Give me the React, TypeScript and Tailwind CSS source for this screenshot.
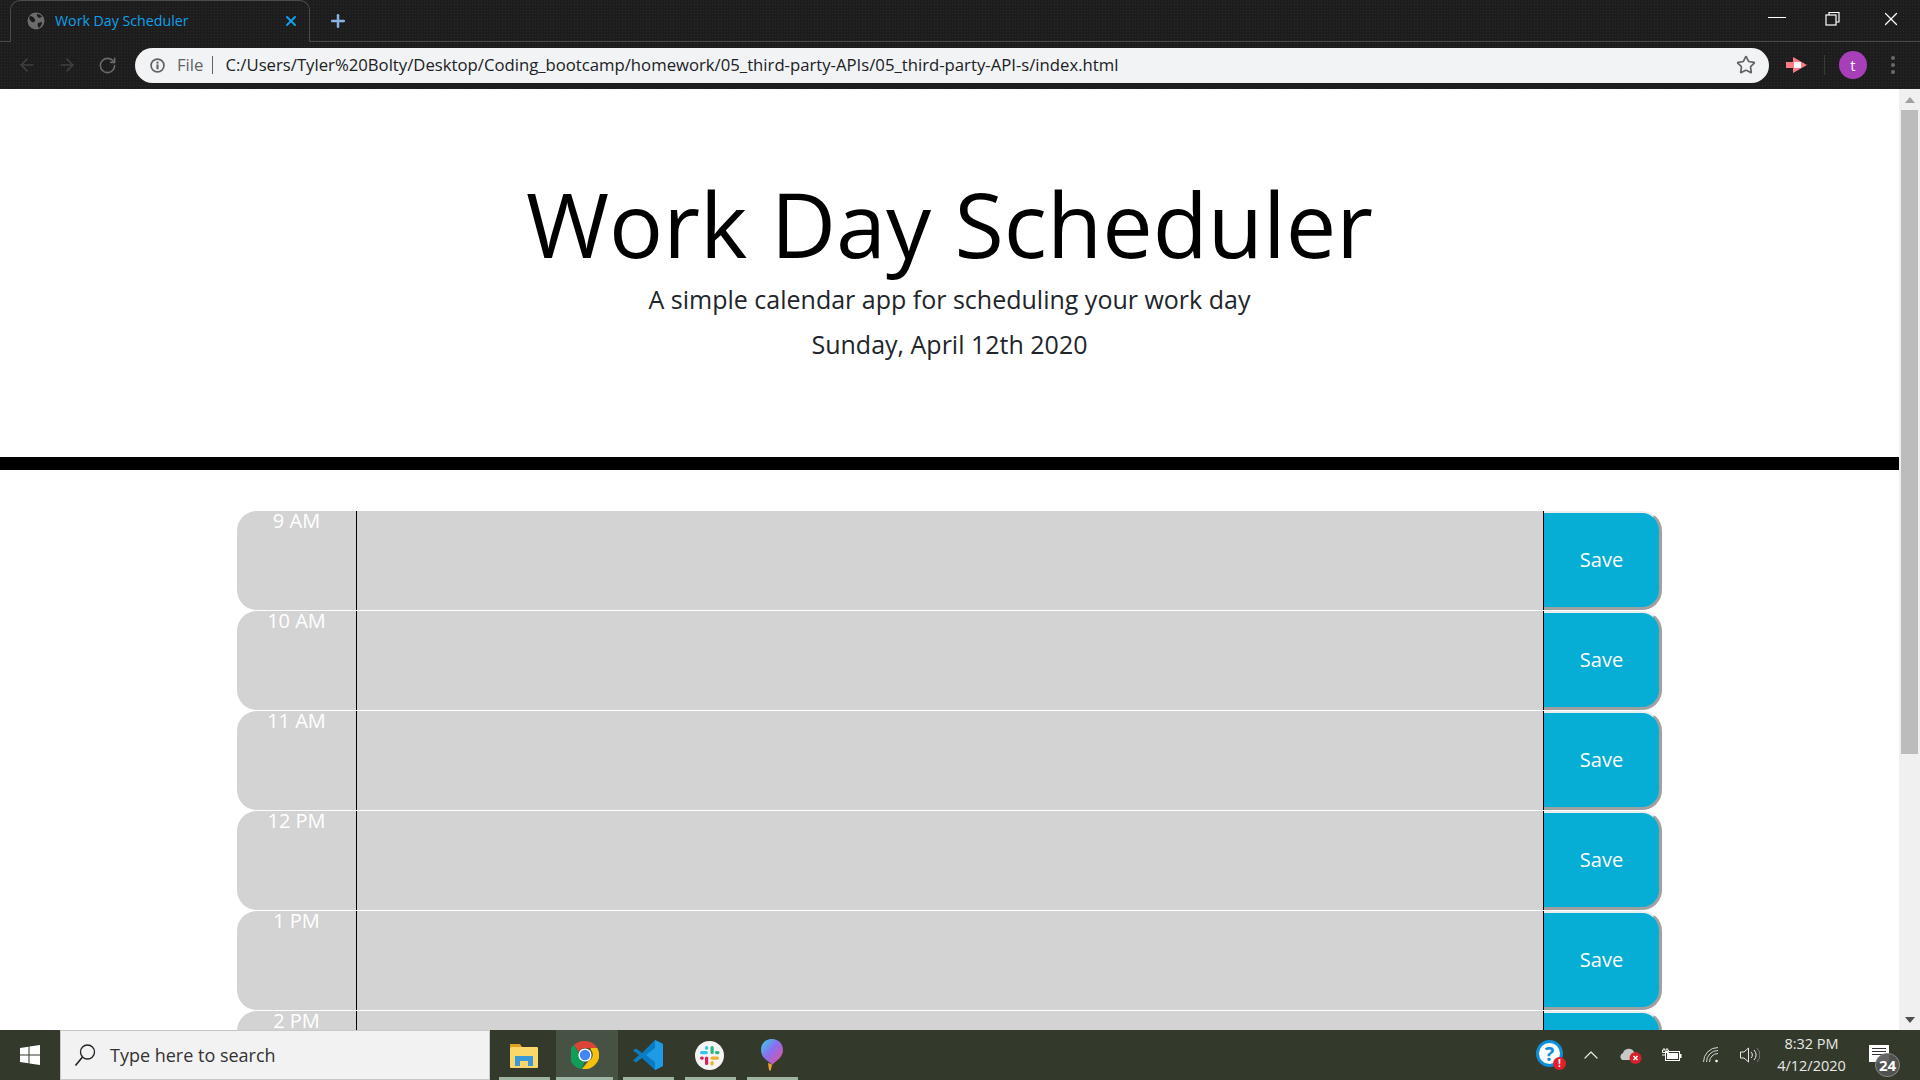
import React from "react";
import { ArrowLeft, ArrowRight, RotateCw, Star, Plus, X, ChevronUp } from "lucide-react";

const font = { fontFamily: '"Open Sans", sans-serif' };
const hours = ["9 AM", "10 AM", "11 AM", "12 PM", "1 PM", "2 PM"];

const GlobeIcon = () => (
  <svg width="18" height="18" viewBox="0 0 18 18">
    <circle cx="9" cy="9" r="8.5" fill="#6b6b6b" />
    <path d="M3 4c2 0 3 1 4 2s2 3 0 4-3-1-4-2-1-3 0-4zM10 2c2 0 4 1 5 3l-3 1-2-2zM11 11l4-1c0 2-1 4-3 6-1-1-2-3-1-5z" fill="#1c1c1c" />
  </svg>
);

const InfoIcon = () => (
  <svg width="15" height="15" viewBox="0 0 14 14" fill="none">
    <circle cx="7" cy="7" r="6" stroke="#5f6368" strokeWidth="1.6" />
    <rect x="6" y="6" width="2" height="4.5" fill="#5f6368" />
    <rect x="6" y="3.4" width="2" height="1.8" fill="#5f6368" />
  </svg>
);

const ExtensionIcon = () => (
  <svg width="22" height="16" viewBox="0 0 22 16">
    <rect x="0" y="5" width="14" height="6" fill="#ff7a85" />
    <path d="M7 0l14 8-14 8z" fill="#ff7a85" />
    <rect x="8" y="5" width="7" height="6" fill="#fff" />
  </svg>
);

const WindowsLogo = () => (
  <svg width="20" height="20" viewBox="0 0 20 20" fill="#fff">
    <path d="M0 3l8.5-1.2v7.7H0zM9.5 1.6L20 0v9.5H9.5zM0 10.5h8.5v7.7L0 17zM9.5 10.5H20V20L9.5 18.4z" />
  </svg>
);

const SearchIcon = () => (
  <svg width="22" height="24" viewBox="0 0 22 24" fill="none" stroke="#222" strokeWidth="1.300">
    <circle cx="13.500" cy="9" r="7" />
    <path d="M8.500 14L1.500 22.500" strokeWidth="1.600" />
  </svg>
);

const FolderIcon = () => (
  <svg width="28" height="26" viewBox="0 0 28 26">
    <path d="M0 2h10l2 3H0z" fill="#e0a020" />
    <rect x="0" y="5" width="28" height="21" rx="1" fill="#fbd668" />
    <path d="M5 24v-10h18v10h-5v-5h-8v5z" fill="#3a9ad9" />
  </svg>
);

const ChromeIcon = () => (
  <svg width="28" height="28" viewBox="0 0 28 28">
    <path d="M14 0a14 14 0 0 1 12.2 7H14a7 7 0 0 0-6.4 4L3 3.8A14 14 0 0 1 14 0z" fill="#db4437" />
    <path d="M3 3.8l5.6 9.8a7 7 0 0 0 5 6.4L11 28A14 14 0 0 1 3 3.8z" fill="#0f9d58" />
    <path d="M26.2 7A14 14 0 0 1 11 27.7L17.500 20A7 7 0 0 0 20 9l-.5-2z" fill="#f4c20d" />
    <circle cx="14" cy="14" r="6.600" fill="#fff" />
    <circle cx="14" cy="14" r="5.200" fill="#4285f4" />
  </svg>
);

const VsCodeIcon = () => (
  <svg width="32" height="32" viewBox="0 0 32 32">
    <path d="M23 1l8 4v22l-8 4-13-12-6 4.500-3-2L7 16 1 11.500l3-2 6 4.500z" fill="#0a7cc4" />
    <path d="M23 1l8 4v22l-8 4zM23 9l-9 7 9 7z" fill="#1f9be6" fillRule="evenodd" />
  </svg>
);

const SlackIcon = () => (
  <svg width="29" height="29" viewBox="0 0 29 29">
    <circle cx="14.500" cy="14.500" r="14.500" fill="#f4f4f4" />
    <rect x="15.500" y="5" width="3.200" height="8" rx="1.600" fill="#2eb67d" />
    <rect x="20" y="10" width="4.500" height="3.200" rx="1.600" fill="#2eb67d" />
    <rect x="5" y="10" width="8" height="3.200" rx="1.600" fill="#36c5f0" />
    <rect x="10" y="5" width="3.200" height="3.800" rx="1.600" fill="#36c5f0" />
    <rect x="15.500" y="15.500" width="8.500" height="3.200" rx="1.600" fill="#ecb22e" />
    <rect x="15.500" y="20" width="3.200" height="4.500" rx="1.600" fill="#ecb22e" />
    <rect x="10" y="15.500" width="3.200" height="8.500" rx="1.600" fill="#e01e5a" />
    <rect x="5" y="15.500" width="3.800" height="3.200" rx="1.600" fill="#e01e5a" />
  </svg>
);

const PinIcon = () => (
  <svg width="24" height="32" viewBox="0 0 24 32">
    <defs>
      <linearGradient id="pin" x1="0" y1="0" x2="1" y2="1">
        <stop offset="0" stopColor="#35d6e8" />
        <stop offset="0.45" stopColor="#8a6ef0" />
        <stop offset="1" stopColor="#f0508a" />
      </linearGradient>
    </defs>
    <path d="M12 0c7 0 11 5 11 11 0 6-5 10-9 13l-2 2c-1-2-2-2-3-3C5 20 1 17 1 11 1 5 5 0 12 0z" fill="url(#pin)" />
    <path d="M8 24l3 1 1 1-1.500 6-1.500-1z" fill="#f0a030" />
  </svg>
);

const HelpIcon = () => (
  <div className="relative w-[30px] h-[30px]">
    <div className="w-[27px] h-[27px] rounded-full bg-white border-[3px] border-[#0e8fd8] flex items-center justify-center text-[#0e8fd8] text-[20px] font-bold leading-none">?</div>
    <div className="absolute right-0 bottom-0 w-[13px] h-[13px] rounded-full bg-[#e0202c] text-white text-[10px] font-bold leading-[13px] text-center">!</div>
  </div>
);

const CloudIcon = () => (
  <svg width="22" height="18" viewBox="0 0 22 18">
    <path d="M2 14a4 4 0 0 1 1-7 6 6 0 0 1 11-1 4 4 0 0 1 3 4l-3 4z" fill="#c8c8c8" />
    <circle cx="15.500" cy="12" r="6" fill="#d8202c" />
    <path d="M13.500 10l4 4M17.500 10l-4 4" stroke="#fff" strokeWidth="1.400" />
  </svg>
);

const BatteryIcon = () => (
  <svg width="21" height="14" viewBox="0 0 21 14" fill="none">
    <path d="M3 0v2M6 0v2M1.500 2h6v2.500h-6zM4.500 4.500V7H1" stroke="#fff" strokeWidth="1" />
    <rect x="4.500" y="3.500" width="14" height="9" stroke="#fff" />
    <rect x="6" y="5" width="11" height="6" fill="#fff" />
    <rect x="19" y="6" width="1.500" height="4" fill="#fff" />
  </svg>
);

const WifiIcon = () => (
  <svg width="16" height="16" viewBox="0 0 16 16" fill="none" stroke="#e8e8e8" strokeWidth="1">
    <path d="M.5 15A14.500 14.500 0 0 1 15 .5M3.500 15A11.500 11.500 0 0 1 15 3.500M6.500 15A8.500 8.500 0 0 1 15 6.500" opacity="0.9" />
    <circle cx="13.500" cy="14" r="1.300" fill="#fff" stroke="none" />
  </svg>
);

const SpeakerIcon = () => (
  <svg width="20" height="16" viewBox="0 0 20 16" fill="none" stroke="#e8e8e8" strokeWidth="1">
    <path d="M.5 5h3.500L8.500 1v14L4 11H.5z" />
    <path d="M11 5a4 4 0 0 1 0 6M14 3a7 7 0 0 1 0 10" />
    <path d="M17 1a10 10 0 0 1 0 14" stroke="#777" />
  </svg>
);

const ScrollArrow = ({ down }: { down?: boolean }) => (
  <svg width="10" height="6" viewBox="0 0 10 6" fill={down ? "#505050" : "#a0a0a0"}>
    <path d={down ? "M0 0h10L5 6z" : "M5 0l5 6H0z"} />
  </svg>
);

const TaskIcon = ({ children }: { children: React.ReactNode }) => (
  <div className="relative w-[51px] h-full flex items-center justify-center shrink-0 pr-[2px]">
    {children}
    <div className="absolute left-0 right-0 bottom-0 h-[3px] bg-[#9fb5a3]" />
  </div>
);

const TimeBlock = ({ hour }: { hour: string }) => (
  <div className="flex h-[100px] shrink-0">
    <div className="w-[120px] h-[99px] bg-[#d3d3d3] rounded-l-[20px] border-r border-black text-center text-white text-[20px] leading-[20px]">
      {hour}
    </div>
    <div className="flex-1 h-[99px] bg-[#d3d3d3] border-r border-black" />
    <button className="w-[118px] h-[99px] bg-[#06aed5] text-white text-[20px] rounded-r-[20px] border-t-[2px] border-t-[#ececec] border-r-[3px] border-r-[#a0a0a0] border-b-[3px] border-b-[#a0a0a0]">
      Save
    </button>
  </div>
);

export default function App() {
  return (
    <div className="h-screen w-full flex flex-col overflow-hidden bg-white" style={font}>
      {/* tab strip */}
      <div className="h-[42px] shrink-0 flex bg-[#1d1d1d] bg-[radial-gradient(#2a2a2a_1px,transparent_1px)] bg-[length:3px_3px]">
        <div className="w-[10px] border-b border-[#4a4a4a]" />
        <div className="w-[300px] h-[42px] shrink-0 flex items-center pl-[16px] pb-[1px] rounded-t-[10px] border border-b-0 border-[#4a4a4a]">
          <GlobeIcon />
          <span className="ml-[10px] text-[14.200px] text-[#12a0ec] w-[228px]">Work Day Scheduler</span>
          <X size={16} strokeWidth={3} color="#12a0ec" />
        </div>
        <div className="flex-1 flex items-center pl-[18px] border-b border-[#4a4a4a]">
          <Plus size={20} strokeWidth={3} color="#8ab0e8" />
          <div className="flex-1" />
          <div className="w-[18px] h-px bg-white mr-[39px] -mt-[6px]" />
          <svg className="mr-[39px] -mt-[4px]" width="16" height="16" viewBox="0 0 16 16" fill="none" stroke="#fff" strokeWidth="1.200">
            <rect x="1" y="4" width="10" height="10" />
            <path d="M4 4V1.500h10V11h-3" />
          </svg>
          <X className="mr-[18px] -mt-[4px]" size={22} strokeWidth={1.300} color="#fff" />
        </div>
      </div>

      {/* toolbar */}
      <div className="h-[47px] shrink-0 flex items-center pb-[1px] bg-[#1d1d1d] bg-[radial-gradient(#2a2a2a_1px,transparent_1px)] bg-[length:3px_3px]">
        <div className="w-[135px] shrink-0 flex items-center pl-[17px] gap-[20px]">
          <ArrowLeft size={20} color="#3f3f3f" strokeWidth={2} />
          <ArrowRight size={20} color="#3f3f3f" strokeWidth={2} />
          <RotateCw className="ml-[1px]" size={19} color="#6a6a6a" strokeWidth={2} />
        </div>
        <div className="flex-1 h-[35px] bg-[#f1f3f4] rounded-full flex items-center pl-[15px] pr-[13px] text-[16.720px] whitespace-nowrap">
          <InfoIcon />
          <span className="ml-[12px] text-[#5f6368]">File</span>
          <div className="w-px h-[18px] bg-[#5f6368] ml-[9px] mr-[12px]" />
          <span className="text-[#202124]">C:/Users/Tyler%20Bolty/Desktop/Coding_bootcamp/homework/05_third-party-APIs/05_third-party-API-s/index.html</span>
          <div className="flex-1" />
          <Star size={20} color="#5f6368" strokeWidth={2} />
        </div>
        <div className="w-[151px] shrink-0 flex items-center pl-[17px]">
          <ExtensionIcon />
          <div className="w-px h-[20px] bg-[#3a3a3a] ml-[16px]" />
          <div className="ml-[14px] w-[28px] h-[28px] rounded-full bg-[#a63fb8] text-white text-[15px] flex items-center justify-center">t</div>
          <div className="ml-[24px] flex flex-col gap-[3px]">
            <div className="w-[4px] h-[4px] rounded-full bg-[#6a6a6a]" />
            <div className="w-[4px] h-[4px] rounded-full bg-[#6a6a6a]" />
            <div className="w-[4px] h-[4px] rounded-full bg-[#6a6a6a]" />
          </div>
        </div>
      </div>

      {/* page */}
      <div className="flex-1 min-h-0 flex">
        <div className="flex-1 min-w-0 overflow-hidden">
          <header className="h-[368px] flex flex-col items-center pt-[81px] text-black">
            <h1 className="text-[90px] leading-[106px] font-normal">Work Day Scheduler</h1>
            <p className="mt-[5px] text-[25px] leading-[36px] font-normal text-[#212529]">A simple calendar app for scheduling your work day</p>
            <p className="text-[25px] leading-[36px] font-normal mt-[9px] text-[#212529]">Sunday, April 12th 2020</p>
          </header>
          <div className="h-[13px] bg-black" />
          <div className="w-[1425px] mx-auto mt-[41px] flex flex-col">
            {hours.map((hour) => (
              <TimeBlock key={hour} hour={hour} />
            ))}
          </div>
        </div>
        <div className="w-[21px] shrink-0 bg-[#f0f0f0] flex flex-col items-center">
          <div className="h-[21px] flex items-center justify-center"><ScrollArrow /></div>
          <div className="w-[17px] h-[644px] bg-[#bcbcbc]" />
          <div className="flex-1" />
          <div className="h-[21px] flex items-center justify-center"><ScrollArrow down /></div>
        </div>
      </div>

      {/* taskbar */}
      <div className="h-[50px] shrink-0 bg-[#343a2b] flex items-stretch">
        <div className="w-[60px] shrink-0 flex items-center justify-center"><WindowsLogo /></div>
        <div className="w-[430px] shrink-0 bg-[#f2f2f2] border border-[#c8c8c8] flex items-center pl-[13px] text-[18px] text-[#333]">
          <SearchIcon />
          <span className="ml-[14px]">Type here to search</span>
        </div>
        <div className="w-[9px] shrink-0" />
        <TaskIcon><FolderIcon /></TaskIcon>
        <div className="relative w-[62px] shrink-0 ml-[6px] bg-[#485244] flex items-center justify-center pr-[5px]">
          <ChromeIcon />
          <div className="absolute left-0 right-[5px] bottom-0 h-[3px] bg-[#9fb5a3]" />
        </div>
        <div className="w-[5px] shrink-0" />
        <TaskIcon><VsCodeIcon /></TaskIcon>
        <div className="w-[11px] shrink-0" />
        <TaskIcon><SlackIcon /></TaskIcon>
        <div className="w-[11px] shrink-0" />
        <TaskIcon><PinIcon /></TaskIcon>
        <div className="flex-1" />
        <div className="flex items-center text-white pr-[19px]">
          <div className="w-[40px] flex justify-center"><HelpIcon /></div>
          <div className="w-[40px] flex justify-center"><ChevronUp size={24} strokeWidth={1.200} color="#e8e8e8" /></div>
          <div className="w-[40px] flex justify-center"><CloudIcon /></div>
          <div className="w-[40px] flex justify-center"><BatteryIcon /></div>
          <div className="w-[40px] flex justify-center"><WifiIcon /></div>
          <div className="w-[38px] flex justify-center"><SpeakerIcon /></div>
          <div className="w-[85px] text-center text-[14.500px] leading-[22px] text-[#e8e8e8]">
            <div>8:32 PM</div>
            <div>4/12/2020</div>
          </div>
          <div className="w-[47px] relative h-full pl-[15px] pt-[15px]">
            <div className="w-[20px] h-[17px] bg-white flex flex-col gap-[2px] p-[3px]">
              <div className="h-px bg-[#333]" />
              <div className="h-px bg-[#333]" />
              <div className="h-px bg-[#333]" />
            </div>
            <div className="absolute left-[21px] top-[23px] w-[25px] h-[24px] rounded-full bg-[#555]/90 border border-[#888] text-white text-[15px] font-bold leading-[22px] text-center">24</div>
          </div>
        </div>
      </div>
    </div>
  );
}
